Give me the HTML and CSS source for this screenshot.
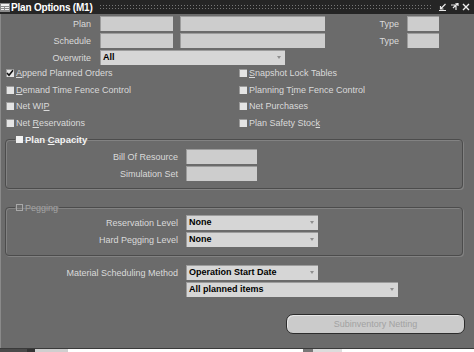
FILE: index.html
```html
<!DOCTYPE html>
<html>
<head>
<meta charset="utf-8">
<title>Plan Options (M1)</title>
<link rel="stylesheet" href="styles.css">
</head>
<body>
<div class="window">
  <div class="titlebar">
    <svg class="app-icon" width="10" height="9" viewBox="0 0 10 9">
      <rect x="0" y="0" width="10" height="9" fill="#8a8a8a"/>
      <rect x="1" y="1" width="8" height="2" fill="#f0f0f0"/>
      <rect x="1" y="4" width="3" height="1" fill="#f0f0f0"/>
      <rect x="5" y="4" width="4" height="1" fill="#f0f0f0"/>
      <rect x="1" y="6" width="3" height="1" fill="#f0f0f0"/>
      <rect x="5" y="6" width="4" height="1" fill="#f0f0f0"/>
    </svg>
    <span class="title">Plan Options (M1)</span>
    <span class="dots"></span>
    <span class="tb-btns">
      <svg width="8" height="8" viewBox="0 0 8 8"><path d="M6.5 1 L1.5 6 M1.5 3 V6 H4.5 M0 7.5 H7" stroke="#e8e8e8" stroke-width="1.2" fill="none"/></svg>
      <svg width="9" height="8" viewBox="0 0 9 8"><path d="M1 2 H6 V7 M3 5 L8 0 M5 0 H8 V3" stroke="#e8e8e8" stroke-width="1.2" fill="none"/></svg>
      <svg width="8" height="8" viewBox="0 0 8 8"><path d="M1 1 L7 7 M7 1 L1 7" stroke="#f0f0f0" stroke-width="1.4" fill="none"/></svg>
    </span>
  </div>

  <div class="content">
    <div class="form-row">
      <span class="lbl">Plan</span>
      <span class="field f1"></span>
      <span class="field f2"></span>
      <span class="lbl type">Type</span>
      <span class="field f3"></span>
    </div>
    <div class="form-row">
      <span class="lbl">Schedule</span>
      <span class="field f1"></span>
      <span class="field f2"></span>
      <span class="lbl type">Type</span>
      <span class="field f3"></span>
    </div>
    <div class="form-row">
      <span class="lbl">Overwrite</span>
      <span class="select s-overwrite">All</span>
    </div>

    <div class="checks">
      <label class="chk"><span class="box checked"><svg width="8" height="8" viewBox="0 0 8 8"><path d="M1 4 L3 6.2 L7 1.2" stroke="#111" stroke-width="1.6" fill="none"/></svg></span><span><u>A</u>ppend Planned Orders</span></label>
      <label class="chk"><span class="box"></span><span><u>S</u>napshot Lock Tables</span></label>
      <label class="chk"><span class="box"></span><span><u>D</u>emand Time Fence Control</span></label>
      <label class="chk"><span class="box"></span><span>Planning T<u>i</u>me Fence Control</span></label>
      <label class="chk"><span class="box"></span><span>Net WI<u>P</u></span></label>
      <label class="chk"><span class="box"></span><span>Net Purchases</span></label>
      <label class="chk"><span class="box"></span><span>Net <u>R</u>eservations</span></label>
      <label class="chk"><span class="box"></span><span>Plan Safety Stoc<u>k</u></span></label>
    </div>

    <fieldset class="group g-capacity">
      <legend class="legend"><span class="lbox"></span><span class="ltext">Plan <u>C</u>apacity</span></legend>
      <div class="frow">
        <span class="glbl">Bill Of Resource</span>
        <span class="field f-bor"></span>
      </div>
      <div class="frow">
        <span class="glbl">Simulation Set</span>
        <span class="field f-bor"></span>
      </div>
    </fieldset>

    <fieldset class="group g-pegging">
      <legend class="legend"><span class="lbox off"></span><span class="ltext off">Pegging</span></legend>
      <div class="frow">
        <span class="glbl">Reservation Level</span>
        <span class="select s-mid">None</span>
      </div>
      <div class="frow">
        <span class="glbl">Hard Pegging Level</span>
        <span class="select s-mid">None</span>
      </div>
    </fieldset>

    <div class="mrow first">
      <span class="mlbl">Material Scheduling Method</span>
      <span class="select s-mid">Operation Start Date</span>
    </div>
    <div class="mrow">
      <span class="mlbl"></span>
      <span class="select s-wide">All planned items</span>
    </div>

    <div class="btn-row">
      <button class="btn" disabled>Subinventory Netting</button>
    </div>
  </div>

  <div class="under">
    <span class="u1"></span><span class="u2"></span><span class="u3"></span><span class="u4"></span><span class="u5"></span><span class="u6"></span><span class="u7"></span>
  </div>
</div>
</body>
</html>
```

FILE: styles.css
```css
* { box-sizing: border-box; }
html, body { margin: 0; padding: 0; }
body {
  width: 474px;
  height: 352px;
  overflow: hidden;
  background: #ffffff;
  font-family: "Liberation Sans", Arial, sans-serif;
  font-size: 9px;
  color: #dadada;
}
.window { display: flex; flex-direction: column; width: 474px; height: 352px; }

.titlebar {
  height: 14px;
  background: #252525;
  display: flex;
  align-items: center;
  padding-left: 0;
  flex: none;
}
.app-icon { margin-right: 1px; flex: none; }
.title { color: #ffffff; font-weight: bold; font-size: 10px; letter-spacing: -0.2px; white-space: nowrap; }
.dots {
  flex: 1;
  height: 6px;
  margin: 0 6px 0 6px;
  background-image: radial-gradient(circle, #777777 0.75px, transparent 1px);
  background-size: 3px 3px;
}
.tb-btns { display: flex; align-items: center; gap: 3px; padding-right: 4px; }

.content {
  height: 334px;
  background: #6b6b6b;
  border-left: 1px solid #8a8a8a;
  flex: none;
  padding-top: 0;
}

.form-row { display: flex; align-items: center; height: 15px; margin-top: 2px; }
.lbl { width: 90px; text-align: right; margin-right: 9px; white-space: nowrap; }
.lbl.type { width: 74px; margin-right: 8px; }
.field {
  height: 15px;
  background: #cdcdcd;
  box-shadow: inset 1px 1px 0 #9c9c9c;
  display: block;
}
.f1 { width: 73px; }
.f2 { width: 145px; margin-left: 7px; }
.f3 { width: 32px; }

.select {
  position: relative;
  height: 15px;
  line-height: 15px;
  background: #d6d6d6;
  box-shadow: inset 1px 1px 0 #9c9c9c;
  color: #000;
  font-weight: bold;
  padding-left: 3px;
  display: block;
  white-space: nowrap;
}
.select::after {
  content: "";
  position: absolute;
  right: 4px;
  top: 6px;
  border-left: 2px solid transparent;
  border-right: 2px solid transparent;
  border-top: 3px solid #8e8e8e;
}
.s-overwrite { width: 185px; }
.s-mid { width: 132px; }
.s-wide { width: 212px; }

.checks {
  display: grid;
  grid-template-columns: 233px auto;
  grid-auto-rows: 16.5px;
  padding-left: 5px;
}
.chk { display: flex; align-items: center; white-space: nowrap; }
.box {
  width: 8px;
  height: 8px;
  background: #e4e4e4;
  border-top: 1px solid #9a9a9a;
  border-left: 1px solid #9a9a9a;
  margin-right: 2px;
  display: flex;
  align-items: center;
  justify-content: center;
  flex: none;
}
.box svg { display: block; margin: -1px 0 0 -1px; }
u { text-decoration: underline; text-underline-offset: 1px; }

.group {
  margin: 3px 0 0 4px;
  width: 458px;
  padding: 4px 0 7px 0;
  border: 1px solid #4c4c4c;
  border-radius: 4px;
  box-shadow: 1px 1px 0 #828282, inset 1px 1px 0 #828282;
  min-inline-size: 0;
}
.g-pegging { margin-top: 13px; padding: 2px 0 8px 0; }
.legend {
  display: flex;
  align-items: center;
  height: 11px;
  margin-left: 9px;
  padding: 0 1px 0 1px;
}
.lbox { width: 7px; height: 7px; background: #f2f2f2; margin-right: 2px; flex: none; }
.lbox.off { background: transparent; border: 1px solid #a8a8a8; }
.ltext { color: #f4f4f4; font-weight: bold; font-size: 9.5px; }
.ltext.off { color: #a4a4a4; font-weight: normal; font-size: 9px; }

.frow { display: flex; align-items: center; height: 15px; margin-top: 2px; }
.frow:first-of-type { margin-top: 0; }
.glbl { width: 172px; text-align: right; margin-right: 8px; white-space: nowrap; }
.f-bor { width: 71px; }

.mrow { display: flex; align-items: center; height: 15px; margin-top: 2px; }
.mrow.first { margin-top: 9px; }
.mlbl { width: 177px; text-align: right; margin-right: 8px; white-space: nowrap; }

.btn-row { display: flex; margin-top: 17px; padding-left: 285px; }
.btn {
  width: 179px;
  height: 20px;
  border: 1px solid #2c2c2c;
  border-radius: 7px;
  background: #cbcbcb;
  box-shadow: inset 1px 1px 0 #e6e6e6;
  color: #a2a2a2;
  font-family: "Liberation Sans", Arial, sans-serif;
  font-size: 9px;
  padding: 0;
}

.under {
  height: 4px;
  border-top: 1px solid #3a3a3a;
  display: flex;
  flex: none;
}
.under span { display: block; height: 3px; }
.u1 { width: 27px; background: #4a4a4a; }
.u2 { width: 8px; background: #333; }
.u3 { width: 33px; background: #cfcfcf; }
.u4 { width: 235px; background: #ffffff; }
.u5 { width: 10px; background: #777; }
.u6 { width: 29px; background: #dcdcdc; }
.u7 { flex: 1; background: #ffffff; }
```
